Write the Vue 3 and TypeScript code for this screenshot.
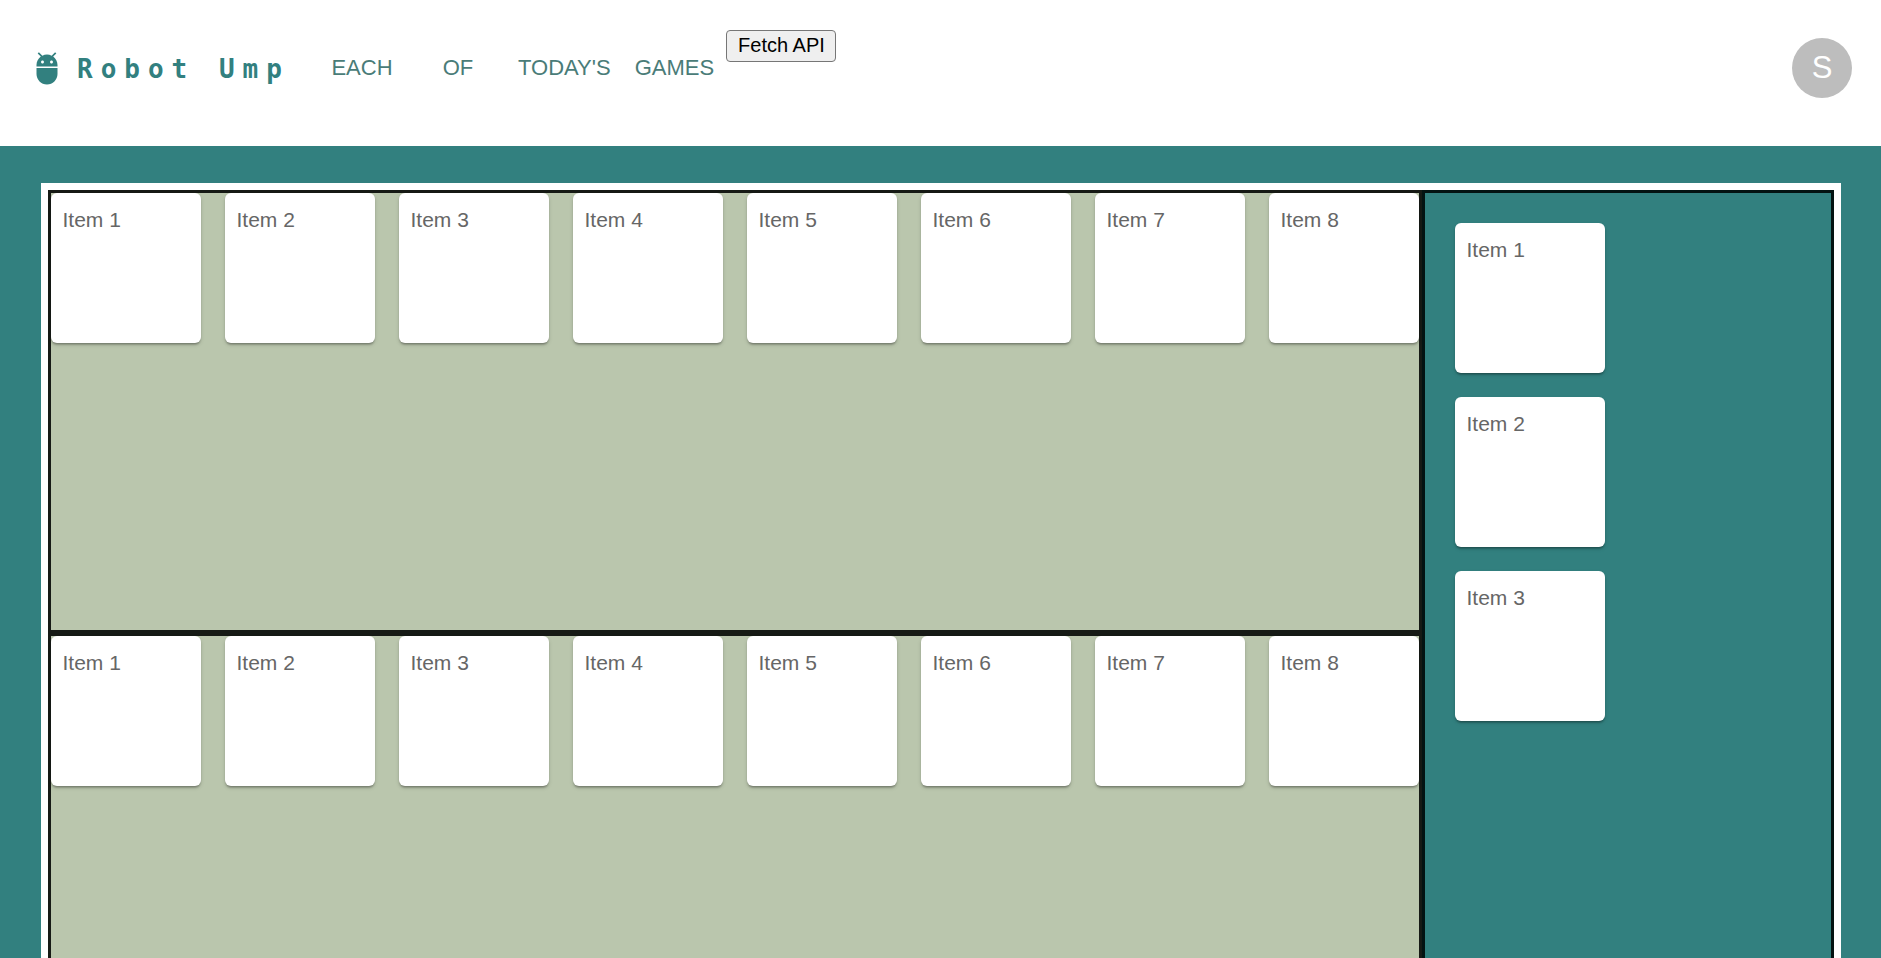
<script setup lang="ts">
const pages: string[] = ['Each', 'Of', "Today's", 'Games']
const boards: number[] = [1, 2]
const boardItems: number[] = [1, 2, 3, 4, 5, 6, 7, 8]
const sideItems: number[] = [1, 2, 3]
</script>

<template>
  <div class="app">
    <header class="bar">
      <a class="brand" href="#">
        <svg class="logo" viewBox="0 0 24 24" aria-hidden="true">
          <path
            d="M5 16c0 3.87 3.13 7 7 7s7-3.13 7-7v-4H5v4zM16.12 4.37l2.1-2.1-.82-.83-2.3 2.31C14.16 3.28 13.12 3 12 3s-2.16.28-3.09.75L6.6 1.44l-.82.83 2.1 2.1C6.14 5.64 5 7.68 5 10v1h14v-1c0-2.32-1.14-4.36-2.88-5.63zM9 9c-.55 0-1-.45-1-1s.45-1 1-1 1 .45 1 1-.45 1-1 1zm6 0c-.55 0-1-.45-1-1s.45-1 1-1 1 .45 1 1-.45 1-1 1z"
          />
        </svg>
        <span class="name">Robot Ump</span>
      </a>
      <nav class="nav">
        <button v-for="page in pages" :key="page" type="button" class="page">{{ page }}</button>
        <button type="button" class="fetch">Fetch API</button>
      </nav>
      <button type="button" class="avatar" aria-label="Open settings">S</button>
    </header>

    <main class="frame">
      <div class="boards">
        <section v-for="board in boards" :key="board" class="board">
          <article v-for="n in boardItems" :key="n" class="card">Item {{ n }}</article>
        </section>
      </div>
      <aside class="side">
        <article v-for="n in sideItems" :key="n" class="card">Item {{ n }}</article>
      </aside>
    </main>
  </div>
</template>

<style>
html {
  scrollbar-width: none;
}

body {
  margin: 0;
  background: #32807f;
}
</style>

<style scoped>
.app {
  font-family: "Liberation Sans", Arial, sans-serif;
  font-size: 22px;
}

.bar {
  display: flex;
  align-items: center;
  padding: 30px 29px 40px;
  background: #fff;
  color: #32807f;
}

.brand {
  display: flex;
  align-items: center;
  gap: 12px;
  width: 285px;
  color: inherit;
  text-decoration: none;
}

.logo {
  width: 36px;
  height: 36px;
  fill: currentColor;
}

.name {
  padding-top: 2px;
  font-family: "DejaVu Sans Mono", monospace;
  font-size: 26px;
  font-weight: 700;
  letter-spacing: 8px;
  white-space: nowrap;
}

.nav {
  display: flex;
  flex: 1;
  align-items: flex-start;
}

.page {
  min-width: 96px;
  height: 76px;
  padding: 0 12px;
  border: 0;
  background: none;
  color: #4a7c78;
  font: inherit;
  text-transform: uppercase;
}

.fetch {
  height: 32px;
  padding: 0 10px 2px 11px;
  border: 1px solid #767676;
  border-radius: 4px;
  background: #efefef;
  color: #000;
  font-family: inherit;
  font-size: 20px;
  line-height: 28px;
}

.avatar {
  width: 60px;
  height: 60px;
  padding: 0;
  border: 0;
  border-radius: 50%;
  background: #bdbdbd;
  color: #fff;
  font-family: inherit;
  font-size: 31px;
}

.frame {
  display: grid;
  grid-template-columns: auto 1fr;
  box-sizing: border-box;
  max-width: 1800px;
  margin: 37px auto;
  border: 7px solid #fff;
}

.board {
  display: flex;
  gap: 24px;
  height: 437px;
  border: 3px solid #161a15;
  background: #bac6ad;
}

.side {
  display: flex;
  flex-direction: column;
  gap: 24px;
  padding: 30px;
  border: 3px solid #031312;
}

.card {
  box-sizing: border-box;
  flex: none;
  width: 150px;
  height: 150px;
  padding: 12px;
  border-radius: 6px;
  background: #fff;
  box-shadow:
    0 3px 2px -2px rgba(0, 0, 0, 0.2),
    0 2px 2px 0 rgba(0, 0, 0, 0.14),
    0 2px 4px 0 rgba(0, 0, 0, 0.12);
  color: #666;
  font-size: 21px;
  line-height: 30px;
}
</style>
